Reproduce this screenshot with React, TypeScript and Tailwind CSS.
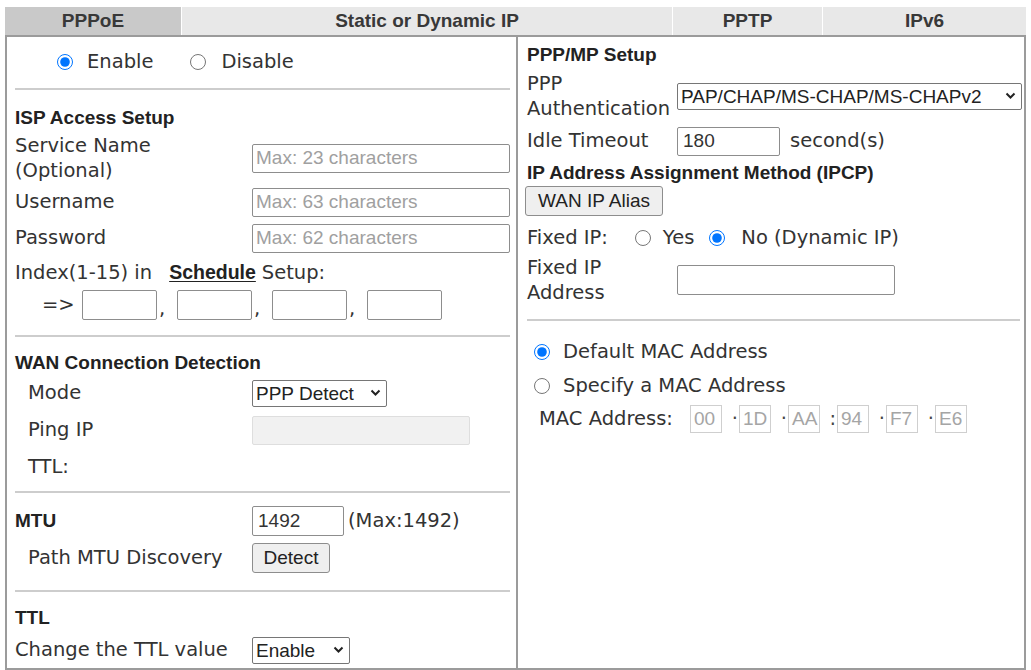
import type { ReactNode } from 'react'

const dv = "font-['DejaVu_Sans',sans-serif]"
const ar = "font-['Liberation_Sans',Arial,sans-serif]"

function Chevron() {
  return (
    <svg width="11" height="8" viewBox="0 0 11 8" className="shrink-0">
      <path d="M1.5 1.5 L5.5 5.5 L9.5 1.5" fill="none" stroke="#222" strokeWidth="2" />
    </svg>
  )
}

function FauxSelect({ value, className }: { value: string; className: string }) {
  return (
    <div
      className={`flex items-center justify-between h-[27px] border border-[#767676] rounded-[2px] bg-white pl-[3px] pr-[5px] text-[19px] leading-none text-[#222] ${ar} ${className}`}
    >
      <span>{value}</span>
      <Chevron />
    </div>
  )
}

function Radio({ name, checked }: { name: string; checked?: boolean }) {
  return <input type="radio" name={name} defaultChecked={checked} className="w-4 h-4 m-0 shrink-0" />
}

function Heading({ children, className = '' }: { children: ReactNode; className?: string }) {
  return (
    <div className={`h-[28px] flex items-center text-[19px] font-bold text-[#222] ${ar} ${className}`}>
      {children}
    </div>
  )
}

function Rule({ className = '' }: { className?: string }) {
  return <div className={`h-[2px] bg-[#cdcdcd] ${className}`} />
}

const inputCls = `h-[29px] border border-[#8d8d8d] rounded-[2px] bg-white px-[3px] text-[19px] text-[#333] placeholder:text-[#a0a0a0] outline-none ${ar}`

export default function App() {
  return (
    <div className={`w-[1031px] h-[670px] overflow-hidden bg-white px-[5px] pt-[7px] flex flex-col text-[19.5px] text-[#333] ${dv}`}>
      {/* Tabs */}
      <div className={`flex h-[28px] text-[19px] font-bold text-[#383838] ${ar}`}>
        <div className="w-[177px] bg-[#c9c9c9] border-r border-white flex items-center justify-center">PPPoE</div>
        <div className="w-[491px] bg-[#e8e8e8] border-r border-white flex items-center justify-center">Static or Dynamic IP</div>
        <div className="w-[150px] bg-[#e8e8e8] border-r border-white flex items-center justify-center">PPTP</div>
        <div className="flex-1 bg-[#e8e8e8] flex items-center justify-center">IPv6</div>
      </div>

      {/* Panels */}
      <div className="flex-1 flex border-2 border-[#9b9b9b]">
        {/* Left */}
        <div className="w-[511px] border-r-2 border-[#9b9b9b] flex flex-col pl-[8px] pr-[6px]">
          <div className="h-[50px] flex items-center pl-[42px]">
            <Radio name="pppoe" checked />
            <span className="ml-[14px]">Enable</span>
            <span className="ml-[37px] flex items-center">
              <Radio name="pppoe" />
            </span>
            <span className="ml-[15px]">Disable</span>
          </div>
          <Rule className="mt-[1px]" />

          <Heading className="mt-[14px]">ISP Access Setup</Heading>
          <div className="h-[52px] flex items-center">
            <div className="w-[237px] leading-[25px]">
              Service Name
              <br />
              (Optional)
            </div>
            <input className={`${inputCls} w-[258px]`} placeholder="Max: 23 characters" />
          </div>
          <div className="h-[36px] flex items-center">
            <div className="w-[237px]">Username</div>
            <input className={`${inputCls} w-[258px]`} placeholder="Max: 63 characters" />
          </div>
          <div className="h-[36px] flex items-center">
            <div className="w-[237px]">Password</div>
            <input className={`${inputCls} w-[258px]`} placeholder="Max: 62 characters" />
          </div>
          <div className="h-[34px] flex items-center">
            <span>Index(1-15) in</span>
            <span className={`ml-[17px] font-bold underline underline-offset-2 text-[#222] text-[19.5px] ${ar}`}>Schedule</span>
            <span className="ml-[6px]">Setup:</span>
          </div>
          <div className="h-[30px] flex items-center pl-[27px]">
            <span className="w-[40px]">=&gt;</span>
            {[0, 1, 2, 3].map((i) => (
              <div key={i} className="flex items-end h-[30px]">
                <input className={`${inputCls} h-[30px] w-[75px]`} />
                {i < 3 && <span className="w-[20px] pl-[2px] leading-[22px]">,</span>}
              </div>
            ))}
          </div>
          <Rule className="mt-[15px]" />

          <Heading className="mt-[12px]">WAN Connection Detection</Heading>
          <div className="h-[32px] flex items-center">
            <div className="w-[237px] pl-[13px]">Mode</div>
            <FauxSelect value="PPP Detect" className="w-[135px]" />
          </div>
          <div className="h-[42px] flex items-center">
            <div className="w-[237px] pl-[13px]">Ping IP</div>
            <div className="h-[29px] w-[218px] border border-[#dedede] rounded-[2px] bg-[#f1f1f1]" />
          </div>
          <div className="h-[32px] flex items-center pl-[13px]">TTL:</div>
          <Rule className="mt-[8px]" />

          <div className="h-[32px] mt-[12px] flex items-center">
            <div className={`w-[237px] text-[19px] font-bold text-[#222] ${ar}`}>MTU</div>
            <input className={`${inputCls} h-[30px] w-[92px] px-[5px]`} defaultValue="1492" />
            <span className="ml-[4px]">(Max:1492)</span>
          </div>
          <div className="h-[42px] flex items-center">
            <div className="w-[237px] pl-[13px]">Path MTU Discovery</div>
            <button className={`h-[30px] w-[78px] border border-[#8d8d8d] rounded-[3px] bg-[#efefef] text-[19px] text-[#222] ${ar}`}>
              Detect
            </button>
          </div>
          <Rule className="mt-[11px]" />

          <Heading className="mt-[12px]">TTL</Heading>
          <div className="h-[36px] flex items-center">
            <div className="w-[237px]">Change the TTL value</div>
            <FauxSelect value="Enable" className="w-[98px]" />
          </div>
        </div>

        {/* Right */}
        <div className="flex-1 flex flex-col pl-[9px] pr-[2px]">
          <Heading className="mt-[4px]">PPP/MP Setup</Heading>
          <div className="h-[54px] flex items-center">
            <div className="w-[150px] leading-[25px]">
              PPP
              <br />
              Authentication
            </div>
            <FauxSelect value="PAP/CHAP/MS-CHAP/MS-CHAPv2" className="w-[345px]" />
          </div>
          <div className="h-[36px] flex items-center">
            <div className="w-[150px]">Idle Timeout</div>
            <input className={`${inputCls} w-[103px] px-[5px]`} defaultValue="180" />
            <span className="ml-[10px]">second(s)</span>
          </div>
          <div className={`h-[26px] mt-[1px] flex items-center text-[19px] font-bold text-[#222] ${ar}`}>
            IP Address Assignment Method (IPCP)
          </div>
          <div className="h-[30px] flex items-center">
            <button className={`-ml-[2px] h-[30px] w-[138px] border border-[#8d8d8d] rounded-[3px] bg-[#efefef] text-[19px] text-[#222] ${ar}`}>
              WAN IP Alias
            </button>
          </div>
          <div className="h-[40px] mt-[2px] flex items-center">
            <span>Fixed IP:</span>
            <span className="ml-[27px] flex items-center">
              <Radio name="fixed" />
            </span>
            <span className="ml-[12px]">Yes</span>
            <span className="ml-[15px] flex items-center">
              <Radio name="fixed" checked />
            </span>
            <span className="ml-[16px]">No (Dynamic IP)</span>
          </div>
          <div className="h-[44px] flex items-center">
            <div className="w-[150px] leading-[25px]">
              Fixed IP
              <br />
              Address
            </div>
            <input className={`${inputCls} h-[30px] w-[218px]`} />
          </div>
          <Rule className="mt-[17px] mr-[2px]" />

          <div className="h-[32px] mt-[15px] flex items-center pl-[7px]">
            <Radio name="mac" checked />
            <span className="ml-[13px]">Default MAC Address</span>
          </div>
          <div className="h-[36px] flex items-center pl-[7px]">
            <Radio name="mac" />
            <span className="ml-[13px]">Specify a MAC Address</span>
          </div>
          <div className="h-[30px] flex items-center pl-[12px]">
            <span className="w-[151px]">MAC Address:</span>
            {['00', '1D', 'AA', '94', 'F7', 'E6'].map((v, i) => (
              <div key={v} className="flex items-center">
                <div className={`h-[28px] w-[32px] border border-[#cfcfcf] bg-white pl-[3px] flex items-center text-[19px] text-[#a5a5a5] ${ar}`}>
                  {v}
                </div>
                {i < 5 && (
                  <span className="w-[17px] text-right pr-[1px] text-[#444] leading-none">{i === 2 ? ':' : '·'}</span>
                )}
              </div>
            ))}
          </div>
        </div>
      </div>
    </div>
  )
}
